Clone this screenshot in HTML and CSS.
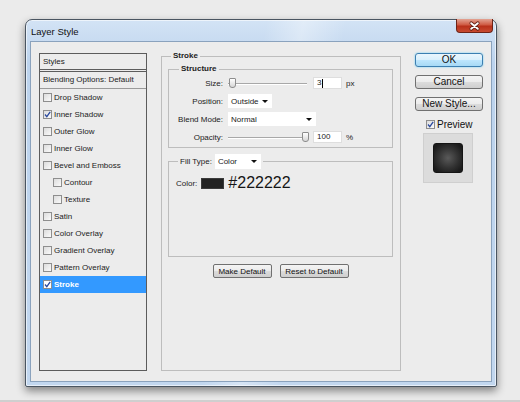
FILE: index.html
```html
<!DOCTYPE html>
<html lang="en">
<head>
    <meta charset="UTF-8">
    <title>Layer Style</title>
    <link rel="stylesheet" href="styles.css">
</head>
<body>
<div class="page">
    <div class="window">
        <div class="titlebar">
            <span class="title">Layer Style</span>
            <span class="close">
                <svg width="37" height="14" viewBox="0 0 37 14">
                    <path d="M15 4 L22 10 M22 4 L15 10" stroke="#5e1d12" stroke-width="3.6" stroke-linecap="round"/>
                    <path d="M15 4 L22 10 M22 4 L15 10" stroke="#fff" stroke-width="2" stroke-linecap="round"/>
                </svg>
            </span>
        </div>
        <div class="content">
            <div class="styles">
                <div class="styles-head">Styles</div>
                <div class="styles-blend">Blending Options: Default</div>
                <div class="item"><span class="cb"></span>Drop Shadow</div>
                <div class="item"><span class="cb"><svg width="7" height="7" viewBox="0 0 7 7"><path d="M1 3.5 L2.8 5.6 L6.2 0.8" fill="none" stroke="#2b4a9e" stroke-width="1.3"/></svg></span>Inner Shadow</div>
                <div class="item"><span class="cb"></span>Outer Glow</div>
                <div class="item"><span class="cb"></span>Inner Glow</div>
                <div class="item"><span class="cb"></span>Bevel and Emboss</div>
                <div class="item sub"><span class="cb"></span>Contour</div>
                <div class="item sub"><span class="cb"></span>Texture</div>
                <div class="item"><span class="cb"></span>Satin</div>
                <div class="item"><span class="cb"></span>Color Overlay</div>
                <div class="item"><span class="cb"></span>Gradient Overlay</div>
                <div class="item"><span class="cb"></span>Pattern Overlay</div>
                <div class="item active"><span class="cb"><svg width="7" height="7" viewBox="0 0 7 7"><path d="M1 3.5 L2.8 5.6 L6.2 0.8" fill="none" stroke="#2b4a9e" stroke-width="1.3"/></svg></span>Stroke</div>
            </div>

            <fieldset class="group stroke">
                <legend>Stroke</legend>
                <fieldset class="group structure">
                    <legend>Structure</legend>
                    <div class="field">
                        <label>Size:</label>
                        <div class="slider"><span class="thumb" style="left:1px"></span></div>
                        <div class="num">3<span class="caret"></span></div>
                        <span class="unit">px</span>
                    </div>
                    <div class="field">
                        <label>Position:</label>
                        <div class="select w-pos">Outside<i class="arrow"></i></div>
                    </div>
                    <div class="field">
                        <label>Blend Mode:</label>
                        <div class="select w-blend">Normal<i class="arrow"></i></div>
                    </div>
                    <div class="field">
                        <label>Opacity:</label>
                        <div class="slider"><span class="thumb" style="left:74px"></span></div>
                        <div class="num">100</div>
                        <span class="unit">%</span>
                    </div>
                </fieldset>

                <fieldset class="group fill">
                    <legend><span>Fill Type:</span><span class="select w-color">Color<i class="arrow"></i></span></legend>
                    <div class="color-row">
                        <span>Color:</span>
                        <span class="swatch"></span>
                        <span class="hex">#222222</span>
                    </div>
                </fieldset>

                <div class="defaults">
                    <button class="btn small w-make">Make Default</button>
                    <button class="btn small w-reset">Reset to Default</button>
                </div>
            </fieldset>

            <div class="actions">
                <button class="btn big ok">OK</button>
                <button class="btn big">Cancel</button>
                <button class="btn big">New Style...</button>
                <div class="preview-check">
                    <span class="cb"><svg width="7" height="7" viewBox="0 0 7 7"><path d="M1 3.5 L2.8 5.6 L6.2 0.8" fill="none" stroke="#2b4a9e" stroke-width="1.3"/></svg></span>Preview
                </div>
                <div class="preview"><div class="preview-tile"></div></div>
            </div>
        </div>
    </div>
    <div class="strip"></div>
</div>
</body>
</html>
```

FILE: styles.css
```css
body { margin: 0; background: #ebebeb; font-family: "Liberation Sans", Arial, sans-serif; font-size: 8px; color: #222; }
.page { height: 402px; overflow: hidden; display: flex; flex-direction: column; }
.strip { height: 2px; background: #cfcfcf; margin-top: 13px; }

.window { margin: 19px 0 0 25px; width: 472px; height: 368px; box-sizing: border-box; border: 1px solid #4a5561; border-radius: 7px 7px 2px 2px; padding: 0 4px 4px; display: flex; flex-direction: column; background: linear-gradient(100deg, rgba(255,255,255,0) 45%, rgba(255,255,255,.35) 52%, rgba(255,255,255,0) 60%), linear-gradient(#d3e3f5, #bcd3ed 12%, #c2d7ef); box-shadow: 0 4px 9px rgba(0,0,0,.45), inset 0 0 0 1px rgba(255,255,255,.6); }
.titlebar { height: 21px; display: flex; justify-content: space-between; align-items: flex-start; }
.title { font-size: 9.5px; color: #111; padding: 6px 0 0 1px; }
.close { width: 37px; height: 14px; margin: -1px -1px 0 0; border: 1px solid #6d2317; border-top: none; box-sizing: border-box; border-radius: 0 0 4px 4px; background: linear-gradient(#e3a393, #cf5a43 45%, #b8301a 55%, #c84a30); display: flex; }

.content { flex: 1; border: 1px solid #8aa2bd; background: #ececec; display: flex; align-items: flex-start; padding: 9px 0 0 8px; }

.styles { margin-top: 2px; width: 108px; height: 318px; box-sizing: border-box; border: 1px solid #5c5c5c; }
.styles-head { height: 15px; line-height: 15px; padding-left: 3px; border-bottom: 3px double #5c5c5c; }
.styles-blend { height: 16px; line-height: 16px; padding-left: 3px; border-bottom: 1px solid #9a9a9a; }
.item { height: 17px; display: flex; align-items: center; gap: 2px; padding-left: 3px; }
.item.sub { padding-left: 13px; }
.item.active { background: #3399ff; color: #fff; font-weight: bold; }
.cb { width: 7px; height: 7px; border: 1px solid #8e8e8e; background: linear-gradient(135deg, #dcdcdc, #fafafa); display: flex; }
.item.active .cb { background: #fff; }

.group { margin: 0; min-width: 0; border: 1px solid #bdbdbd; box-sizing: border-box; }
.group > legend { font-weight: bold; line-height: 10px; padding: 0 2px; }
.stroke { margin-left: 14px; width: 240px; height: 320px; padding: 3px 7px 0 6px; }
.stroke > legend { margin-left: 3px; }
.structure { padding: 0 4px 1px 0; }
.structure > legend { margin-left: 10px; }

.field { display: flex; align-items: center; height: 18px; }
.field label { width: 54px; text-align: right; margin-right: 5px; }
.slider { position: relative; width: 79px; height: 10px; }
.slider::before { content: ""; position: absolute; left: 0; right: 0; top: 5px; height: 1px; background: #a8a8a8; box-shadow: 0 1px 0 #fff; }
.thumb { position: absolute; top: 0; width: 5px; height: 8px; border: 1px solid #8d8d8d; border-radius: 1px 1px 3px 3px; background: linear-gradient(#fff, #d6d6d6); }
.num { margin-left: 6px; width: 29px; height: 12px; box-sizing: border-box; background: #fff; border: 1px solid #dedede; padding-left: 3px; line-height: 10px; display: flex; align-items: center; }
.caret { width: 1px; height: 9px; background: #000; margin-left: 1px; }
.unit { margin-left: 4px; }

.select { display: flex; align-items: center; justify-content: space-between; height: 14px; box-sizing: border-box; background: #fff; padding: 0 4px 0 3px; font-weight: normal; }
.w-pos { width: 44px; }
.w-blend { width: 88px; }
.w-color { width: 46px; height: 15px; margin-left: 3px; }
.arrow { width: 0; height: 0; border-left: 3px solid transparent; border-right: 3px solid transparent; border-top: 3px solid #111; }

.fill { margin-top: 6px; height: 103px; padding: 0; }
.fill > legend { margin-left: 9px; font-weight: normal; display: flex; align-items: center; line-height: 15px; }
.color-row { display: flex; align-items: center; height: 16px; margin-top: 6px; padding-left: 7px; }
.swatch { width: 23px; height: 11px; box-sizing: border-box; background: #222; border: 1px solid #3a3a3a; margin-left: 4px; }
.hex { font-size: 16px; line-height: 1; color: #151515; margin-left: 4px; }

.defaults { display: flex; justify-content: center; gap: 8px; margin-top: 7px; }
.btn { font-family: "Liberation Sans", Arial, sans-serif; color: #111; border: 1px solid #707070; border-radius: 2px; background: linear-gradient(#f4f4f4, #ebebeb 50%, #dcdcdc 50%, #cfcfcf); padding: 0; box-sizing: border-box; }
.btn.small { height: 14px; font-size: 8px; }
.w-make { width: 59px; }
.w-reset { width: 69px; }

.actions { margin: 2px 0 0 14px; width: 68px; display: flex; flex-direction: column; gap: 8px; }
.btn.big { height: 14px; font-size: 10px; line-height: 12px; border-radius: 3px; }
.btn.ok { border-color: #3c7fb1; background: linear-gradient(#eaf6fd, #d9f0fc 50%, #bee6fd 50%, #a7d9f5); box-shadow: 0 0 2px #62cdf5; }
.preview-check { display: flex; align-items: center; gap: 2px; height: 10px; padding-left: 11px; font-size: 10px; color: #111; }
.preview { margin: -4px 0 0 8px; width: 50px; height: 50px; box-sizing: border-box; background: #dcdcdc; border: 1px solid #cfcfcf; display: flex; align-items: center; justify-content: center; }
.preview-tile { width: 30px; height: 30px; box-sizing: border-box; border-radius: 3px; border: 1px solid #151515; background: radial-gradient(circle, #5a5a5a 0%, #333 50%, #1b1b1b 85%); }
```
